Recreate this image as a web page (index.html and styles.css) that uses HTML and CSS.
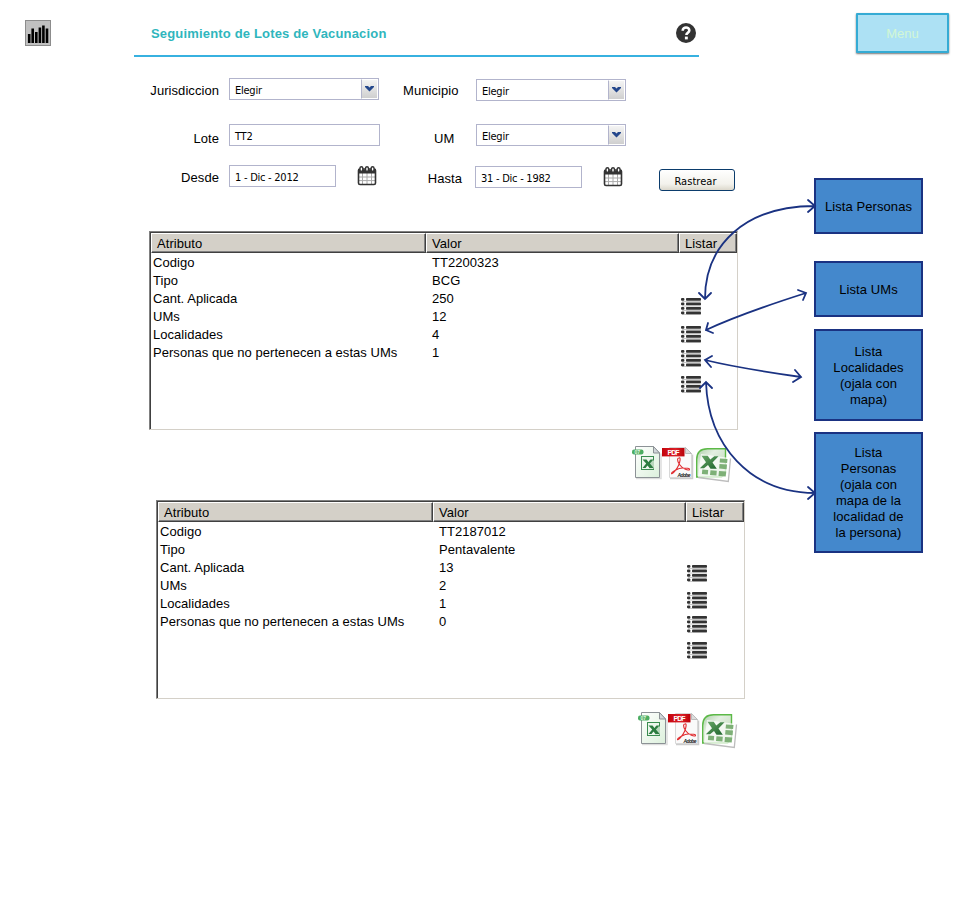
FILE: index.html
```html
<!DOCTYPE html>
<html lang="es">
<head>
<meta charset="utf-8">
<title>Seguimiento de Lotes de Vacunacion</title>
<link rel="stylesheet" href="styles.css">
</head>
<body>
<svg class="defs" width="0" height="0" aria-hidden="true">
  <defs>
    <linearGradient id="sheet" x1="0" y1="0" x2="1" y2="1"><stop offset="0" stop-color="#fff"/><stop offset="1" stop-color="#dcf0dc"/></linearGradient>
    <linearGradient id="banner" x1="0" y1="0" x2="1" y2="0"><stop offset="0" stop-color="#c4040c"/><stop offset=".6" stop-color="#dc2028"/><stop offset="1" stop-color="#b80008"/></linearGradient>
    <linearGradient id="leaf" x1="0" y1="0" x2="1" y2="1"><stop offset="0" stop-color="#a8cca4"/><stop offset=".35" stop-color="#e4efe2"/><stop offset="1" stop-color="#b4d4ac"/></linearGradient>
    <linearGradient id="cross" x1="0" y1="0" x2="1" y2="1"><stop offset="0" stop-color="#6aa868"/><stop offset="1" stop-color="#1d642c"/></linearGradient>
  </defs>
  <symbol id="list" viewBox="0 0 20 18">
    <g fill="#c8c8c8"><path d="M1 4h19v1H1zM1 8.6h19v1H1zM1 13h19v1H1zM1 17h19v1H1z"/></g>
    <g fill="#333"><rect x="0" y="1" width="3.4" height="2.8" rx="1"/><rect x="5" y="1" width="15" height="2.8" rx=".8"/><rect x="0" y="5.4" width="3.4" height="2.8" rx="1"/><rect x="5" y="5.4" width="15" height="2.8" rx=".8"/><rect x="0" y="10" width="3.4" height="2.8" rx="1"/><rect x="5" y="10" width="15" height="2.8" rx=".8"/><rect x="0" y="14.4" width="3.4" height="2.8" rx="1"/><rect x="5" y="14.4" width="15" height="2.8" rx=".8"/></g>
  </symbol>
  <symbol id="calendar" viewBox="0 0 20 20">
    <path d="M5.500 7v11M10 7v11M14.500 7v11M2 11h16M2 14.600h16" stroke="#aaa" stroke-width="1"/>
    <rect x="1.500" y="3" width="17" height="15.500" rx="1.500" fill="none" stroke="#333" stroke-width="1.600"/>
    <path d="M1 3.500h18v4H1z" fill="#333"/>
    <g fill="#fff" stroke="#333" stroke-width="1.400"><rect x="3" y=".7" width="2.800" height="4.600" rx="1.400"/><rect x="8.600" y=".7" width="2.800" height="4.600" rx="1.400"/><rect x="14.200" y=".7" width="2.800" height="4.600" rx="1.400"/></g>
  </symbol>
  <symbol id="exports" viewBox="0 0 100 40">
    <path d="M4 34.500h25v-25" fill="none" stroke="#ddd" stroke-width="1.500"/>
    <path d="M3.500 2.500h18l6 6.500v24.500h-24z" fill="url(#sheet)" stroke="#8c9296"/>
    <path d="M21.500 2.500v6.500h6z" fill="#d2d6da" stroke="#8c9296"/>
    <rect x="0" y="5.500" width="11.500" height="5" rx="2" fill="#4cad62"/>
    <rect x="9.500" y="12.500" width="12" height="13" fill="#edf6ed" stroke="#3a8c50"/>
    <path d="M17 16.500h5v8h-5z" fill="#b9d8bd"/>
    <path d="M10.500 15.500h4l2 2.400 2-2.400h3l-3.600 4 3.800 4.500h-4.200l-2-2.600-2 2.600h-3l3.700-4.500z" fill="#2c7c40"/>
    <path d="M38 34.500h22.500v-24" fill="none" stroke="#ccc" stroke-width="1.500"/>
    <path d="M37.500 3.500h16l6 6v24h-22z" fill="#fafafa" stroke="#d8d8d8"/>
    <path d="M53.500 3.500v6h6z" fill="#ddd" stroke="#bcbcbc"/>
    <rect x="30" y="4" width="22.500" height="8.400" fill="url(#banner)"/>
    <path d="M47 14c2-1 1 4-.5 7.500S40 31 39.500 29.500s7-5.500 11-5.500 7.500 0 7 1.500-7-.5-10-5-2-6.500-.5-6.500z" fill="none" stroke="#e02c30" stroke-width="1.100"/>
    <path d="M64.700 33V15.500q0-10.800 10.800-10.800h18v25l-4 3.300z" fill="url(#leaf)" stroke="#5cb947" stroke-width="1.400"/>
    <path d="M69 10l29 4-2.500 23-29.500-4z" fill="#fff" opacity=".72"/>
    <path d="M98.500 14.500l-2.200 23-30-4" fill="none" stroke="#bdbdbd" stroke-width="1.300"/>
    <path d="M88 14.500l7.500.6-.4 4-7.500-.6zM87.500 20l7.500.6-.4 4.600-7.500-.6zM87 27l7.200.6-.5 4.900-7.200-.6zM78.500 26.300l6.300.5-.4 4.700-6.400-.5zM70.300 25.500l5.900.5-.4 4.600-5.900-.5z" fill="#7eb077"/>
    <path d="M69.500 11.800h6.200l2.600 3.800 4-3.400h4.200l-6 6.300 4.300 6.300h-6.300l-2.500-3.800-4 3.300h-4.200l6.200-6z" fill="url(#cross)"/>
  </symbol>
</svg>

<div class="page">
  <aside class="side">
    <svg class="chart" viewBox="0 0 26 26"><rect x=".5" y=".5" width="25" height="25" fill="#c0c0c0" stroke="#8c8c8c"/><path d="M4.200 14v9M7.700 8.500V23M11.300 12v11M14.900 7.500V23M18.400 5.500V23M22 8.500V23" stroke="#000" stroke-width="2.600"/></svg>
  </aside>

  <main class="content">
    <header class="head">
      <h1 class="title">Seguimiento de Lotes de Vacunacion</h1>
      <svg class="help" viewBox="0 0 20 20"><circle cx="10" cy="10" r="10" fill="#333"/><path d="M6.700 7.800C6.700 3.300 13.500 3.800 13.300 7.500c-.1 2.300-2.900 2.300-2.900 4.600" fill="none" stroke="#fff" stroke-width="2.600"/><rect x="8.900" y="13.600" width="2.900" height="2.800" fill="#fff"/></svg>
    </header>

    <form class="form">
      <div class="row row-place">
        <label class="label">Jurisdiccion</label>
        <div class="field select"><span>Elegir</span><i class="drop"><svg viewBox="0 0 9 6"><path d="M0 0h3l1.500 1.500L6 0h3v1L4.500 5.500 0 1z"/></svg></i></div>
        <label class="label second municipio">Municipio</label>
        <div class="field select lower"><span>Elegir</span><i class="drop"><svg viewBox="0 0 9 6"><path d="M0 0h3l1.500 1.500L6 0h3v1L4.500 5.500 0 1z"/></svg></i></div>
      </div>
      <div class="row row-lot">
        <label class="label">Lote</label>
        <div class="field input"><span>TT2</span></div>
        <label class="label second um">UM</label>
        <div class="field select"><span>Elegir</span><i class="drop"><svg viewBox="0 0 9 6"><path d="M0 0h3l1.500 1.500L6 0h3v1L4.500 5.500 0 1z"/></svg></i></div>
      </div>
      <div class="row row-date">
        <label class="label">Desde</label>
        <div class="field date"><span>1 - Dic - 2012</span></div>
        <svg class="cal"><use href="#calendar"/></svg>
        <label class="label second hasta">Hasta</label>
        <div class="field date lower"><span>31 - Dic - 1982</span></div>
        <svg class="cal lower"><use href="#calendar"/></svg>
        <button class="track" type="button">Rastrear</button>
      </div>
    </form>

    <section class="result first">
      <div class="grid">
        <div class="grid-head"><div>Atributo</div><div>Valor</div><div>Listar</div></div>
        <div class="grid-body">
          <dl class="pairs">
            <dt>Codigo</dt><dd>TT2200323</dd>
            <dt>Tipo</dt><dd>BCG</dd>
            <dt>Cant. Aplicada</dt><dd>250</dd>
            <dt>UMs</dt><dd>12</dd>
            <dt>Localidades</dt><dd>4</dd>
            <dt>Personas que no pertenecen a estas UMs</dt><dd>1</dd>
          </dl>
          <div class="lists"><svg><use href="#list"/></svg><svg><use href="#list"/></svg><svg><use href="#list"/></svg><svg><use href="#list"/></svg></div>
        </div>
      </div>
      <svg class="exports" viewBox="0 0 100 40"><use href="#exports"/><text class="tag" x="2.500" y="10">07</text><text class="pdf" x="35.500" y="10.600" textLength="12">PDF</text><text class="adobe" x="45.500" y="33" textLength="13">Adobe</text></svg>
    </section>

    <section class="result other">
      <div class="grid">
        <div class="grid-head"><div>Atributo</div><div>Valor</div><div>Listar</div></div>
        <div class="grid-body">
          <dl class="pairs">
            <dt>Codigo</dt><dd>TT2187012</dd>
            <dt>Tipo</dt><dd>Pentavalente</dd>
            <dt>Cant. Aplicada</dt><dd>13</dd>
            <dt>UMs</dt><dd>2</dd>
            <dt>Localidades</dt><dd>1</dd>
            <dt>Personas que no pertenecen a estas UMs</dt><dd>0</dd>
          </dl>
          <div class="lists"><svg><use href="#list"/></svg><svg><use href="#list"/></svg><svg><use href="#list"/></svg><svg><use href="#list"/></svg></div>
        </div>
      </div>
      <svg class="exports" viewBox="0 0 100 40"><use href="#exports"/><text class="tag" x="2.500" y="10">07</text><text class="pdf" x="35.500" y="10.600" textLength="12">PDF</text><text class="adobe" x="45.500" y="33" textLength="13">Adobe</text></svg>
    </section>
  </main>

  <aside class="notes">
    <a class="menu">Menu</a>
    <div class="note people">Lista Personas</div>
    <div class="note units">Lista UMs</div>
    <div class="note places">Lista Localidades (ojala con mapa)</div>
    <div class="note outside">Lista Personas (ojala con mapa de la localidad de la persona)</div>
  </aside>

  <svg class="arrows" viewBox="0 0 960 900">
    <path d="M705 299C705 245 745 206 815 206M699 293l6 6 6-6M808 200l7 6-7 6"/>
    <path d="M706 330Q740 314 806 293M708 323l-2 7 7 3M798 290l8 3-3 7"/>
    <path d="M705 360Q738 368 801 377M712 356l-7 4 6 7M795 370l6 7-8 5"/>
    <path d="M706 382C708 445 750 493 815 493M700 388l6-6 6 6M808 487l7 6-7 6"/>
  </svg>
</div>
</body>
</html>
```
FILE: styles.css
```css
* { box-sizing: border-box; }
body {
  margin: 0;
  background: #fff;
  color: #000;
  font: 13px/16px "Liberation Sans", Arial, sans-serif;
}
.defs { position: absolute; }
.page {
  position: relative;
  display: grid;
  grid-template-columns: 134px 680px 146px;
  width: 960px;
  height: 900px;
  overflow: hidden;
}
svg { display: block; flex: none; }

.side { padding: 20px 0 0 25px; }
.chart { width: 26px; height: 26px; }

.head {
  display: flex;
  justify-content: space-between;
  align-items: flex-start;
  width: 565px;
  height: 57px;
  padding: 23px 3px 0 17px;
  border-bottom: 2px solid #37b1e0;
}
.title {
  margin: 3px 0 0;
  font-size: 13px;
  line-height: 16px;
  letter-spacing: .17px;
  color: #2fb6bd;
}
.help { width: 20px; height: 20px; }

.form { padding-top: 21px; }
.row { display: flex; align-items: flex-start; }
.row-place { height: 46px; }
.row-lot { height: 41px; }
.row-date { height: 66px; }
.label {
  width: 85px;
  margin: 5px 10px 0 0;
  text-align: right;
  white-space: nowrap;
  letter-spacing: .06px;
}
.row-lot .label { margin-top: 7px; }
.label.second { width: auto; flex: none; }
.label.municipio { margin-left: 24px; margin-right: 18px; width: 55px; }
.label.um { margin-left: 54px; margin-right: 22px; width: 20px; }
.label.hasta { margin-left: 50px; margin-right: 13px; width: 35px; margin-top: 6px; }
.field {
  display: flex;
  justify-content: space-between;
  flex: none;
  height: 22px;
  padding-left: 5px;
  border: 1px solid #b2b4cc;
  background: #fff;
  font: 11px/24px "DejaVu Sans Condensed", "DejaVu Sans", sans-serif;
  font-stretch: condensed;
  letter-spacing: -.25px;
  white-space: nowrap;
}
.select { width: 150px; }
.input { width: 151px; }
.date { width: 107px; }
.lower { margin-top: 1px; }
.drop {
  display: flex;
  justify-content: center;
  width: 17px;
  height: 20px;
  padding-top: 7px;
  border: 1px solid #fff;
  border-left: 1px solid #b2b4cc;
  background: linear-gradient(#f4f4f4, #cfcfcf);
}
.drop svg { width: 9px; height: 6px; margin-top: -1px; fill: #24478c; }
.cal { width: 20px; height: 20px; margin: 1px 0 0 21px; }
.cal.lower { margin-top: 2px; }
.track {
  width: 76px;
  height: 22px;
  margin: 4px 0 0 36px;
  padding: 3px 3px 0 0;
  border: 1px solid #0b3c6c;
  border-radius: 3px;
  background: linear-gradient(#fff, #f3f2ec 70%, #dcd8cc);
  color: #000;
  font: 11px/18px "DejaVu Sans Condensed", "DejaVu Sans", sans-serif;
  font-stretch: condensed;
  letter-spacing: .05px;
}

.result { height: 269px; }
.first { padding-left: 15px; }
.other { padding-left: 22px; }
.grid {
  width: 589px;
  height: 199px;
  border: 1px solid #d4d0c8;
  border-top-color: #808080;
  border-left-color: #808080;
  box-shadow: inset 1px 1px #404040;
  padding: 1px 0 0 1px;
}
.grid-head {
  display: grid;
  grid-template-columns: 275px 253px 58px;
  grid-template-rows: 20px;
  height: 20px;
  background: #d4d0c8;
}
.grid-head div {
  padding-left: 5px;
  border: 1px solid #404040;
  border-top-color: #fff;
  border-left-color: #fff;
  box-shadow: inset -1px -1px #808080;
  line-height: 19px;
  letter-spacing: .05px;
}
.grid-body { display: flex; }
.pairs {
  display: grid;
  grid-template-columns: 279px 249px;
  grid-auto-rows: 18px;
  margin: 0;
  padding-left: 2px;
  line-height: 20px;
  letter-spacing: .04px;
  white-space: nowrap;
}
.pairs dd { margin: 0; }
.lists { padding-top: 44px; }
.other .lists { padding-top: 42px; margin-left: -1px; }
.lists svg { width: 20px; height: 18px; }
.lists svg:nth-child(2) { margin-top: 10px; }
.other .lists svg:nth-child(2) { margin-top: 9px; }
.lists svg:nth-child(3) { margin-top: 6px; }
.lists svg:nth-child(4) { margin-top: 8px; }
.exports { width: 100px; height: 40px; margin: 14px 0 0 483px; overflow: visible; }
.other .exports { margin: 11px 0 0 482px; }
.exports text { font-weight: bold; }
.tag { font-size: 5px; fill: #e0f5e0; }
.pdf { font-size: 7px; fill: #fff; }
.adobe { font-size: 5px; font-style: italic; fill: #222; }

.notes { padding-top: 13px; }
.menu {
  display: flex;
  justify-content: center;
  align-items: center;
  width: 93px;
  height: 40px;
  margin-left: 42px;
  padding-top: 2px;
  border: 2px solid #35abd4;
  border-radius: 1px;
  background: #ade1f4;
  box-shadow: 0 1px 2px #777;
  color: #d2f7d4;
}
.note {
  display: flex;
  justify-content: center;
  align-items: center;
  width: 109px;
  border: 2px solid #1a3282;
  background: #4488cc;
  text-align: center;
  letter-spacing: .08px;
}
.people { height: 56px; margin-top: 125px; padding-top: 2px; }
.units { height: 56px; margin-top: 27px; padding-top: 2px; }
.places { height: 92px; margin-top: 12px; padding: 2px 16px 0; }
.outside { height: 121px; margin-top: 11px; padding: 0 16px; }

.arrows {
  position: absolute;
  inset: 0;
  width: 960px;
  height: 900px;
  pointer-events: none;
  fill: none;
  stroke: #1a3282;
  stroke-width: 1.8;
  stroke-linecap: round;
}
```
